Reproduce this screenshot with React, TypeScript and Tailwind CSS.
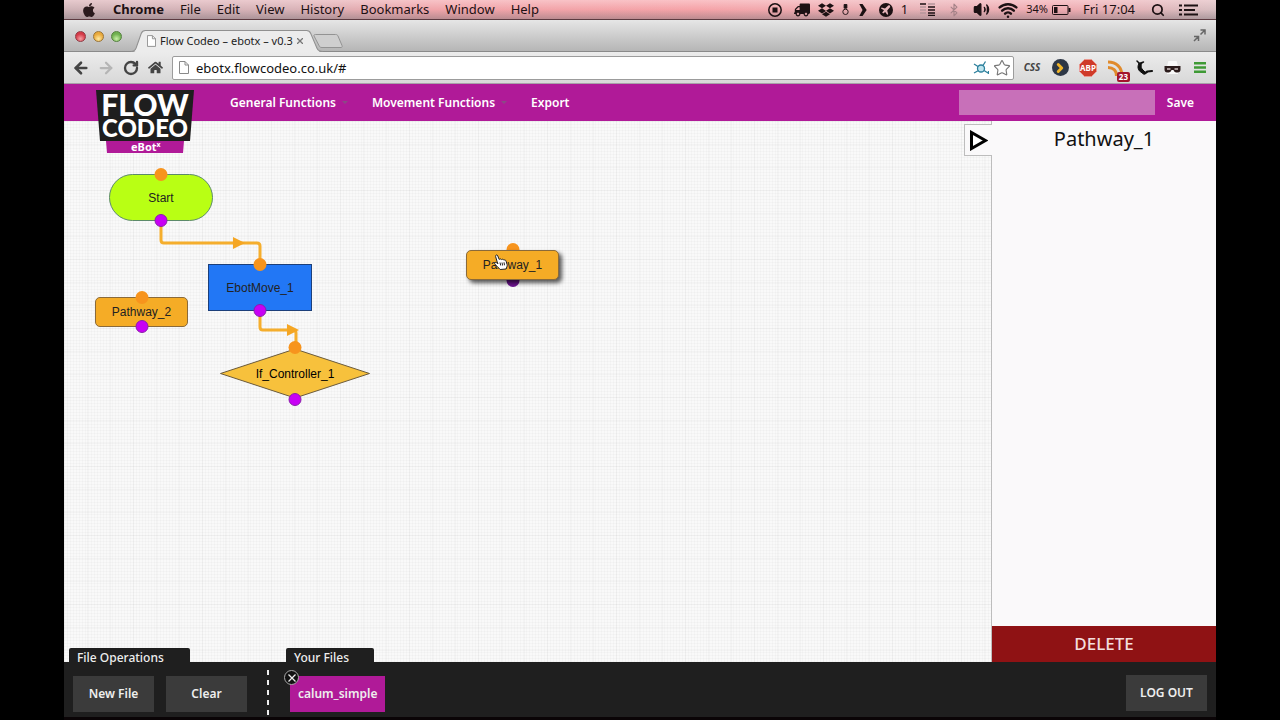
import type { ReactNode } from 'react';
import { ArrowLeft, ArrowRight, RotateCw, Search, Star, Volume2, Wifi, Bluetooth, ChevronRight } from 'lucide-react';
import { FaApple, FaDropbox, FaHome, FaTruck } from 'react-icons/fa';

const menus = ['File', 'Edit', 'View', 'History', 'Bookmarks', 'Window', 'Help'];

function PageIcon({ className }: { className: string }) {
  return (
    <svg viewBox="0 0 10 13" className={className} fill="#fff" stroke="#8a8a8a">
      <path d="M.5.5h5.5l3.5 3.5v8.500h-9z" />
      <path d="M6 .5v3.500h3.500" fill="none" />
    </svg>
  );
}

function MenuBar() {
  return (
    <header className="flex h-5 items-center whitespace-nowrap border-b border-[#5c3a40] bg-[linear-gradient(to_bottom,rgba(255,225,228,0.5),rgba(255,255,255,0)_50%,rgba(120,110,115,0.45)),linear-gradient(to_right,#cfb3b7,#d9b3b8_20%,#f0a5aa_32%,#f5a3a8_55%,#e8b3b8_75%,#f0aab0_86%,#d8bfc2)] pl-[17px] pr-[18px] text-[13px] text-[#1c1113]">
      <FaApple className="size-4 text-[#2a1a1d]" />
      <button className="ml-4 font-bold">Chrome</button>
      <nav className="ml-4 flex gap-4">
        {menus.map((m) => (
          <button key={m}>{m}</button>
        ))}
      </nav>
      <div className="ml-auto flex items-center">
        <svg viewBox="0 0 14 14" className="size-3.5" fill="none" stroke="#1c1113" strokeWidth="1.500">
          <circle cx="7" cy="7" r="6.200" />
          <rect x="4.500" y="4.500" width="5" height="5" fill="#1c1113" stroke="none" />
        </svg>
        <FaTruck className="ml-3 size-4 -scale-x-100" />
        <FaDropbox className="ml-2 size-4" />
        <svg viewBox="0 0 7 13" className="ml-2 h-3 w-[7px]" fill="none" stroke="#1c1113">
          <path d="M2 .5h3v4H2z" fill="#1c1113" />
          <circle cx="3.500" cy="8.500" r="2.900" />
        </svg>
        <svg viewBox="0 0 8 13" className="ml-2.5 h-3 w-2" fill="#1c1113">
          <path d="M0 0h3.500L8 6.500 3.500 13H0l3.500-6.500z" />
        </svg>
        <svg viewBox="0 0 14 14" className="ml-3 size-3.5">
          <circle cx="7" cy="7" r="7" fill="#1c1113" />
          <path d="M2.500 4.500l3.500 1 3.500-3.200 1.500.2.200 1.500L8.200 7.500l1 3.800-1 .5L6.200 9l-2 1.600-1-1L5 7.300 2 5.500z" fill="#e6b5ba" />
        </svg>
        <span className="ml-2">1</span>
        <svg viewBox="0 0 15 13" className="ml-3 h-[13px] w-[15px]" strokeWidth="1.500">
          <path d="M0 1h6M8 4h7M8 7h7M8 10h7M8 12.500h7" stroke="#1c1113" />
          <path d="M0 4h6M0 7h6M0 10h6M8 1h7" stroke="#b5959a" />
        </svg>
        <Bluetooth className="ml-3 size-3.5 text-[#a58388]" />
        <Volume2 className="ml-3 size-[17px] fill-[#1c1113]" />
        <Wifi className="ml-2 size-5" strokeWidth={3} />
        <span className="ml-2 text-[11px]">34%</span>
        <svg viewBox="0 0 19 10" className="ml-1 h-2.5 w-[19px]" fill="none" stroke="#1c1113">
          <rect x=".5" y=".5" width="15.500" height="9" rx="1" />
          <path d="M17.500 3v4" strokeWidth="2" />
          <path d="M2 2h3.500v6H2z" fill="#1c1113" stroke="none" />
        </svg>
        <time className="ml-3">Fri 17:04</time>
        <Search className="ml-4 size-3.5" strokeWidth={3} />
        <svg viewBox="0 0 19 12" className="ml-3.5 h-3 w-[19px]" stroke="#1c1113" strokeWidth="2">
          <path d="M0 1.500h3M0 6h3M0 10.500h3M5 1.500h14M5 6h11M5 10.500h14" />
        </svg>
      </div>
    </header>
  );
}

function TabStrip() {
  const lights = [
    ['Close', 'bg-[radial-gradient(circle_at_50%_75%,#f7a0a4,#d43a48_60%)] border-[#8f3a44]'],
    ['Minimise', 'bg-[radial-gradient(circle_at_50%_75%,#ffe9a0,#e9a93c_60%)] border-[#9a7436]'],
    ['Zoom', 'bg-[radial-gradient(circle_at_50%_75%,#c9f0a6,#6fb04f_60%)] border-[#55803f]'],
  ];
  return (
    <div className="flex h-8 items-end bg-linear-to-b from-[#e6e6e6] to-[#b4b4b4] shadow-[inset_0_-1px_0_#8a8a8a]">
      <div className="flex gap-[7px] self-center pl-[11px] pt-px">
        {lights.map(([label, look]) => (
          <button key={label} aria-label={label} className={`size-[11px] rounded-full border ${look}`} />
        ))}
      </div>
      <div className="relative ml-[9px] flex h-[22px] w-48 items-center pl-4">
        <svg viewBox="0 0 188 22" preserveAspectRatio="none" className="absolute inset-0 size-full">
          <path d="M0 21.500c3 0 4-1 5-3.500L10 3.500C11 1 12 .5 14 .5h158c2 0 3 .5 4 3L182 18c1 2.500 3 3.500 6 3.500V22H0z" fill="#ececec" stroke="#909090" />
          <path d="M4 21.500h180" stroke="#ececec" />
        </svg>
        <PageIcon className="relative h-3 w-[9px]" />
        <span className="relative ml-1 whitespace-nowrap text-[11px] text-[#222]">Flow Codeo – ebotx – v0.3</span>
        <button aria-label="Close tab" className="relative ml-auto mr-5">
          <svg viewBox="0 0 6 6" className="size-1.5" stroke="#777" strokeWidth="1.300">
            <path d="M0 0l6 6M6 0L0 6" />
          </svg>
        </button>
      </div>
      <button aria-label="New tab" className="-ml-2.5 mb-1">
        <svg viewBox="0 0 30 14" className="h-3.5 w-[30px]" fill="#cfcfcf" stroke="#939393">
          <path d="M2.500.5h20c1.500 0 2 .5 2.500 1.500l4 9.500c.5 1.500 0 2-1 2H9c-1.500 0-2.500-.5-3-2L1 2C.5 1 1.500.5 2.500.5z" />
        </svg>
      </button>
      <button aria-label="Full screen" className="mb-2.5 ml-auto mr-2.5">
        <svg viewBox="0 0 13 13" className="size-[13px]" fill="none" stroke="#666" strokeWidth="1.500">
          <path d="M7.500 1H12v4.500M12 1L7.500 5.500M1 7.500h4.500V12M5.500 7.500L1 12" />
        </svg>
      </button>
    </div>
  );
}

function Extension({ label, children }: { label: string; children: ReactNode }) {
  return (
    <button aria-label={label} className="relative flex w-7 items-center justify-center">
      {children}
    </button>
  );
}

function AddressBar() {
  return (
    <div className="flex h-8 items-center border-b border-[#a8a0a8] bg-linear-to-b from-[#ececec] to-[#d8d8d8] pl-1 pr-0.5 text-[#444]">
      <button aria-label="Back" className="flex w-[25px] justify-center"><ArrowLeft className="size-[18px]" strokeWidth={3.500} /></button>
      <button aria-label="Forward" className="flex w-[25px] justify-center text-[#b5b5b5]"><ArrowRight className="size-[18px]" strokeWidth={3} /></button>
      <button aria-label="Reload" className="flex w-[25px] justify-center"><RotateCw className="size-4" strokeWidth={3.500} /></button>
      <button aria-label="Home" className="flex w-[25px] justify-center"><FaHome className="size-[15px]" /></button>
      <div className="ml-1 mr-1 flex h-6 flex-1 items-center rounded-xs border border-[#9c9c9c] bg-white pl-1.5 pr-0.5">
        <PageIcon className="h-[13px] w-2.5" />
        <input
          aria-label="Address"
          defaultValue="ebotx.flowcodeo.co.uk/#"
          className="ml-[7px] min-w-0 flex-1 text-[13px] leading-5 text-[#111] outline-none"
        />
        <svg viewBox="0 0 16 14" className="h-3.5 w-4" fill="#bfe4ee" stroke="#2b7f9c" strokeWidth="1.300">
          <circle cx="8" cy="7.500" r="3.500" />
          <path d="M1 3l4 2.500M1 12l4.500-2.500M10 4.500L12.500.5M11 9.500l4 2.500M15.500 10v3" />
        </svg>
        <button aria-label="Bookmark" className="ml-1"><Star className="size-[18px] text-[#777]" strokeWidth={1.500} /></button>
      </div>
      <Extension label="CSS"><span className="text-[10px] font-bold italic">CSS</span></Extension>
      <Extension label="Next">
        <span className="flex size-[17px] items-center justify-center rounded-full bg-[#2d3746]">
          <ChevronRight className="size-3.5 text-[#f0b429]" strokeWidth={5} />
        </span>
      </Extension>
      <Extension label="Adblock">
        <svg viewBox="0 0 18 18" className="size-[18px]">
          <path d="M5.500.5h7l5 5v7l-5 5h-7l-5-5v-7z" fill="#cf3a2a" stroke="#e9988f" />
          <text x="9" y="12" textAnchor="middle" className="fill-white text-[8px] font-bold">ABP</text>
        </svg>
      </Extension>
      <Extension label="Feeds">
        <svg viewBox="0 0 16 16" className="size-4" fill="none" stroke="#e08a2c" strokeWidth="3">
          <path d="M0 2c8 0 14 5 14 14M0 7.500c5 0 8.500 3 8.500 8.500" />
        </svg>
        <span className="absolute -bottom-1.5 right-0 rounded-xs bg-[#a3142c] px-0.5 text-[8px] font-bold leading-[10px] text-white">23</span>
      </Extension>
      <Extension label="Runner">
        <svg viewBox="0 0 17 16" className="h-4 w-[17px]" fill="#111" stroke="#111" strokeLinecap="round" strokeLinejoin="round">
          <path d="M3 3.500l3-.5c-1.200 2-1.200 4 0 6l3.500 3.500-2 1.500L3.500 11C1.500 8.500 1.500 6 3 3.500z" />
          <path d="M8.500 13.500l3-2 4.500-.5" fill="none" strokeWidth="2.200" />
          <path d="M1 1l2.500 2.500L7.500 2" fill="none" strokeWidth="1.500" />
        </svg>
      </Extension>
      <Extension label="Incognito">
        <svg viewBox="0 0 17 14" className="h-3.5 w-[17px]">
          <path d="M3 5l1.500-5h8L14 5v8H3z" fill="#fafafa" />
          <path d="M.5 5h16v3.500c0 2-1 3-3 3s-3.500-.5-4-2.500h-2c-.5 2-2 2.500-4 2.500s-3-1-3-3z" fill="#2c1c1c" />
          <path d="M3 7h3.500v2H3zM10.500 7H14v2h-3.500z" fill="#a89a9a" />
        </svg>
      </Extension>
      <Extension label="Menu">
        <svg viewBox="0 0 12 11" className="h-[11px] w-3" stroke="#3f9a35" strokeWidth="2.500">
          <path d="M0 1.200h12M0 5.500h12M0 9.800h12" />
        </svg>
      </Extension>
    </div>
  );
}

function Logo() {
  return (
    <a href="#" aria-label="Flow Codeo eBot" className="absolute left-8 top-1.5 z-20 block">
      <svg viewBox="0 0 98 64" className="h-16 w-[98px] overflow-visible">
        <path d="M10 51h78l-1 12H11z" fill="#b01a98" />
        <path d="M0 0h98l-4 51H4z" fill="#1e1e1e" />
        <g fill="#fff" textAnchor="middle" className="font-['Lato',sans-serif] font-black">
          <text x="49" y="26" className="text-[30px]">FLOW</text>
          <text x="49" y="47" className="text-[24px]">CODEO</text>
        </g>
        <text x="35" y="61" fill="#fff" className="text-[11px] font-bold">
          eBot<tspan dy="-4" className="text-[7px]">x</tspan>
        </text>
      </svg>
    </a>
  );
}

function AppNav() {
  return (
    <nav className="relative flex h-[37px] items-center bg-[#b01a98] pl-[166px] pr-[22px] text-[12px] font-semibold text-white">
      <Logo />
      <button className="flex items-center gap-1.5">
        General Functions
        <span className="border-x-3 border-t-3 border-x-transparent border-t-[#8a4a85]" />
      </button>
      <button className="ml-6 flex items-center gap-1.5">
        Movement Functions
        <span className="border-x-3 border-t-3 border-x-transparent border-t-[#8a4a85]" />
      </button>
      <button className="ml-6">Export</button>
      <input aria-label="File name" className="ml-auto h-[25px] w-[196px] bg-[#c870b9] px-2 outline-none" />
      <button className="ml-3">Save</button>
    </nav>
  );
}

function Ports({ faded = false }: { faded?: boolean }) {
  return (
    <>
      <span className="absolute -top-[7px] left-1/2 size-[13px] -translate-x-1/2 rounded-full bg-[#f7941d]" />
      <span
        className={`absolute -bottom-[7px] left-1/2 size-[13px] -translate-x-1/2 rounded-full ${faded ? '-z-10 bg-[#6d1290]' : 'border border-[#8a1fa8] bg-[#c800f5]'}`}
      />
    </>
  );
}

function Canvas() {
  return (
    <main className="relative flex-1 overflow-hidden bg-[#f9f9f9] bg-[linear-gradient(to_right,rgba(0,0,0,0.02)_1px,transparent_1px),linear-gradient(to_bottom,rgba(0,0,0,0.02)_1px,transparent_1px),linear-gradient(to_right,rgba(0,0,0,0.025)_1px,transparent_1px),linear-gradient(to_bottom,rgba(0,0,0,0.025)_1px,transparent_1px)] bg-size-[3px_3px,3px_3px,23px_23px,23px_23px] font-['Liberation_Sans',Arial,sans-serif] text-[12px] text-[#222]">
      <svg className="absolute left-0 top-0" width="300" height="300" fill="none" stroke="#f5ae2d" strokeWidth="3">
        <path d="M97 105v14q0 3 3 3h93q3 0 3 3v17" />
        <path d="M196 194v12q0 3 3 3h30q3 0 3 3v14" />
        <path d="M169 116l12 6-12 6zM223 203l12 6-12 6z" fill="#f5a623" stroke="none" />
      </svg>

      <div className="absolute left-[45px] top-[53px] flex h-[47px] w-[104px] items-center justify-center rounded-full border border-[#5c8a6a] bg-[#b9ff14]">
        Start
        <Ports />
      </div>
      <div className="absolute left-36 top-[143px] flex h-[47px] w-[104px] items-center justify-center border border-[#1c3f7a] bg-[#2277f5]">
        EbotMove_1
        <Ports />
      </div>
      <div className="absolute left-[31px] top-44 flex h-[30px] w-[93px] items-center justify-center rounded-[5px] border border-[#8a6a3a] bg-[#f5ac26]">
        Pathway_2
        <Ports />
      </div>
      <div className="absolute left-[156px] top-[227px] flex h-[51px] w-[150px] items-center justify-center text-black">
        <svg viewBox="0 0 150 51" className="absolute inset-0 size-full" fill="#f7c13c" stroke="#6b5a3a">
          <path d="M.5 25.500L75 1l74.500 24.500L75 50z" />
        </svg>
        <span className="relative">If_Controller_1</span>
        <Ports />
      </div>

      {/* Node being dragged */}
      <div className="absolute left-[402px] top-[129px] isolate h-[30px] w-[93px]">
        <Ports faded />
        <div className="relative flex h-full items-center justify-center rounded-[5px] border border-[#8a6a3a] bg-[#f5ac26] shadow-[3px_3px_4px_rgba(0,0,0,0.65)]">Pathway_1</div>
      </div>
      <svg viewBox="0 0 14 16" className="absolute left-[430px] top-[133px] h-4 w-3.5" fill="#fff" stroke="#222" strokeLinejoin="round">
        <path d="M3.200 8L1.600 2.500C1.300.8 3.200.3 3.800 2l1.400 3.500c.7-.9 1.800-.7 2.300.1.700-.7 1.900-.4 2.300.5.900-.5 2 0 2.300 1.100l1 3.300c.4 1.800-.6 3-1.100 4.500l-5.800.5C4.500 13.500 3 12.500.8 10 .1 8.800 1.400 7.800 2.500 8.700l1.500 1z" />
        <path d="M6 8.500l.7 3M8 8.500l.6 3M10 8.300l.5 3" />
      </svg>
    </main>
  );
}

function Inspector() {
  return (
    <aside className="relative flex w-[225px] flex-col border-l border-[#bdbdbd] bg-[#faf9fa]">
      <button
        aria-label="Collapse panel"
        className="absolute -left-7 top-[3px] flex h-8 w-7 items-center justify-center border border-r-0 border-[#bdbdbd] bg-[#faf9fa]"
      >
        <svg viewBox="0 0 18 21" className="h-[21px] w-[18px]" fill="#fff" stroke="#000" strokeWidth="3">
          <path d="M1.500 2.500v16L15.500 10.500z" />
        </svg>
      </button>
      <h2 className="pt-1 text-center text-[20px] leading-7 text-[#111]">Pathway_1</h2>
      <button className="mt-auto h-9 bg-[#8f1214] text-[17px] font-medium text-[#f3dede]">DELETE</button>
    </aside>
  );
}

function FooterGroup({ title, children, className }: { title: string; children: ReactNode; className: string }) {
  return (
    <section className="-mt-3.5">
      <h3 className={`h-5 rounded-t-xs bg-[#1f1f1f] pl-2 text-[12px] font-medium leading-5 ${className}`}>{title}</h3>
      <div className="flex gap-3 pl-1 pt-2">{children}</div>
    </section>
  );
}

function Footer() {
  return (
    <footer className="relative flex h-[58px] items-start border-b-3 border-[#0a0406] bg-[#1f1f1f] pl-[5px] pr-[9px] text-[12px] font-semibold text-[#eee]">
      <FooterGroup title="File Operations" className="w-[121px]">
        <button className="h-9 w-[81px] bg-[#3b3b3b]">New File</button>
        <button className="h-9 w-[81px] bg-[#3b3b3b]">Clear</button>
      </FooterGroup>
      <div className="ml-5 mt-2 h-[46px] w-0.5 bg-[repeating-linear-gradient(to_bottom,#eee_0,#eee_5px,transparent_5px,transparent_10px)]" />
      <div className="ml-[17px]">
        <FooterGroup title="Your Files" className="w-[88px]">
          <div className="relative">
            <button className="h-9 bg-[#b01a98] px-2">calum_simple</button>
            <button aria-label="Remove calum_simple" className="absolute -left-1.5 -top-1.5 flex size-[15px] items-center justify-center rounded-full border border-[#aaa] bg-[#111]">
              <svg viewBox="0 0 8 8" className="size-2" stroke="#eee" strokeWidth="1.300">
                <path d="M.5.5l7 7M7.500.5l-7 7" />
              </svg>
            </button>
          </div>
        </FooterGroup>
      </div>
      <button className="ml-auto mt-[13px] h-9 w-[81px] bg-[#3b3b3b]">LOG OUT</button>
    </footer>
  );
}

export default function App() {
  return (
    <div className="min-h-screen bg-black px-16 font-['Noto_Sans','Open_Sans',sans-serif]">
      <div className="flex min-h-screen flex-col">
        <MenuBar />
        <TabStrip />
        <AddressBar />
        <AppNav />
        <div className="flex flex-1">
          <Canvas />
          <Inspector />
        </div>
        <Footer />
      </div>
    </div>
  );
}
